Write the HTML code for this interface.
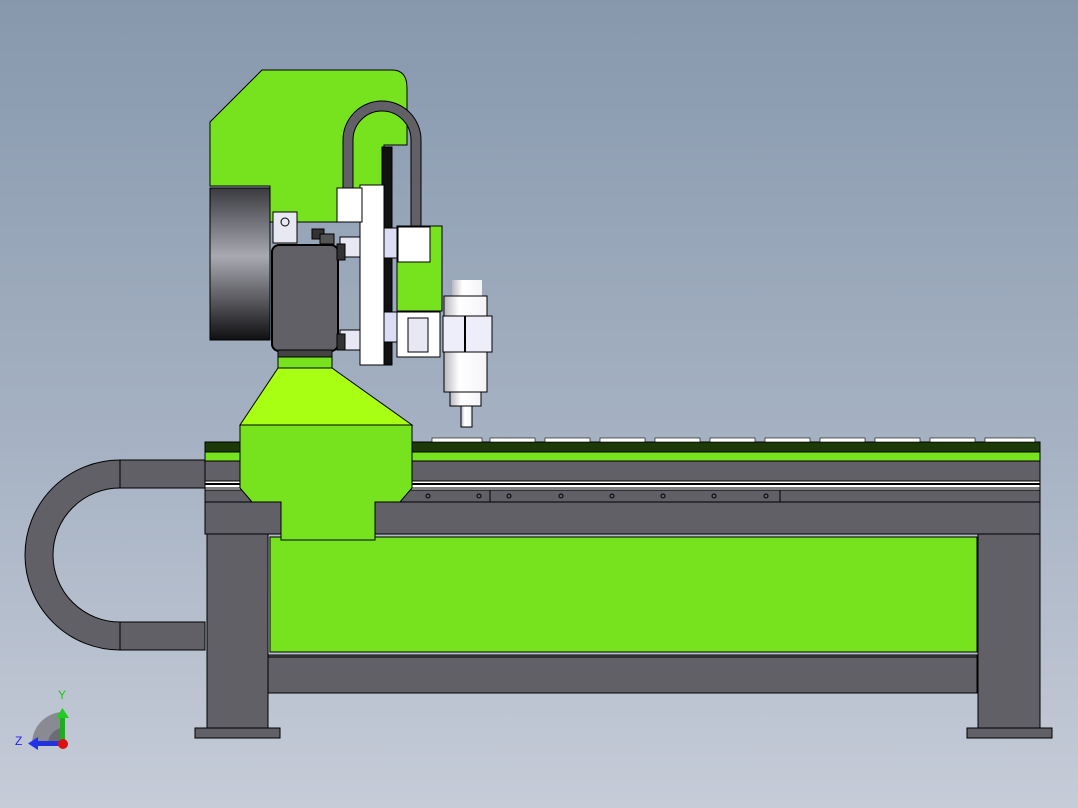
<!DOCTYPE html>
<html><head><style>
html,body{margin:0;padding:0;width:1078px;height:808px;overflow:hidden}
body{background:linear-gradient(#8798ad,#a6b2c3 55%,#c6ccd8)}
svg{display:block}
</style></head><body>
<svg width="1078" height="808" viewBox="0 0 1078 808" xmlns="http://www.w3.org/2000/svg">
<defs>
<linearGradient id="drum" x1="0" y1="0" x2="0" y2="1">
<stop offset="0" stop-color="#3a3a40"/><stop offset="0.45" stop-color="#a9a9b2"/><stop offset="1" stop-color="#101012"/></linearGradient>
<linearGradient id="sp" x1="0" y1="0" x2="1" y2="0">
<stop offset="0" stop-color="#b8b8c0"/><stop offset="0.35" stop-color="#ffffff"/><stop offset="1" stop-color="#f4f4f8"/></linearGradient>
</defs>
<g stroke="#000" stroke-width="1">
<!-- cable chain -->
<path d="M205 460 H120 A95 95 0 0 0 120 650 H205 V622 H120 A67 67 0 0 1 120 488 H205 Z" fill="#616066"/>
<line x1="120" y1="460" x2="120" y2="488"/><line x1="120" y1="622" x2="120" y2="650"/>
<!-- legs -->
<rect x="207" y="533" width="61" height="195" fill="#616066"/>
<rect x="195" y="728" width="85" height="10" fill="#616066"/>
<rect x="978" y="533" width="62" height="195" fill="#616066"/>
<rect x="967" y="728" width="85" height="10" fill="#616066"/>
<!-- panel -->
<rect x="270" y="537" width="707" height="115" fill="#76e31e"/>
<rect x="268" y="655" width="709" height="38" fill="#616066"/>
<line x1="268" y1="657" x2="977" y2="657"/>
<!-- beam -->
<rect x="205" y="502" width="835" height="32" fill="#616066"/>
<rect x="205" y="490" width="835" height="12" fill="#616066"/>
<rect x="205" y="461" width="835" height="20" fill="#616066"/>
<rect x="205" y="452" width="835" height="9" fill="#76e31e"/>
<rect x="205" y="442" width="835" height="10" fill="#1c3a06"/>
<rect x="205" y="481" width="835" height="9" fill="#fff"/>
<line x1="205" y1="484" x2="1040" y2="484" stroke-width="2"/>
<line x1="205" y1="488" x2="1040" y2="488"/>
<line x1="490" y1="490" x2="490" y2="502"/><line x1="780" y1="490" x2="780" y2="502"/>
<!-- gantry -->
<path d="M278 368 H332 L412 425 H240 Z" fill="#a8ff14"/>
<rect x="278" y="356" width="54" height="12" fill="#76e31e"/>
<path d="M240 425 H412 V488 L400 502 H375 V540 H281 V502 H252 L240 488 Z" fill="#76e31e"/>
<!-- upper body -->
<path d="M210 122 L262 70 H392 Q407 70 407 88 V145 H384 V188 H337 V222 H270 V186 H210 Z" fill="#76e31e"/>
<rect x="210" y="188" width="60" height="152" fill="url(#drum)"/>
<rect x="272" y="245" width="66" height="106" rx="7" fill="#616066" stroke-width="2"/>
<rect x="278" y="350" width="54" height="7" fill="#444"/>
<rect x="273" y="212" width="24" height="31" fill="#e8e8f2"/>
<circle cx="285" cy="222" r="4" fill="none"/>
<rect x="312" y="229" width="12" height="10" fill="#333"/>
<rect x="320" y="234" width="14" height="10" fill="#555"/>
<!-- cable loop -->
<path d="M343 190 V140 A38 38 0 0 1 421 140 V228 H411 V140 A28 28 0 0 0 353 140 V190 Z" fill="#616066"/>
<!-- plate -->
<rect x="382" y="147" width="10" height="218" fill="#111"/>
<rect x="360" y="185" width="24" height="180" fill="#fff"/>
<rect x="337" y="188" width="25" height="34" fill="#fff"/>
<rect x="340" y="237" width="20" height="20" fill="#e8e8f4"/>
<rect x="340" y="330" width="20" height="20" fill="#e8e8f4"/>
<rect x="337" y="244" width="8" height="16" fill="#333"/>
<rect x="337" y="334" width="8" height="16" fill="#333"/>
<rect x="384" y="228" width="14" height="30" fill="#dcdcf4"/>
<rect x="384" y="312" width="14" height="30" fill="#dcdcf4"/>
<rect x="397" y="226" width="45" height="85" fill="#76e31e"/>
<rect x="398" y="227" width="32" height="35" fill="#fff"/>
<rect x="397" y="312" width="43" height="45" fill="#fff"/>
<rect x="408" y="318" width="20" height="34" fill="#e8e8f4"/>
<!-- spindle -->
<rect x="452" y="280" width="30" height="16" fill="url(#sp)" stroke="none"/>
<rect x="444" y="296" width="43" height="96" fill="url(#sp)"/>
<rect x="443" y="316" width="49" height="36" fill="#eeeefa"/>
<line x1="465" y1="316" x2="465" y2="352" stroke-width="2"/>
<rect x="450" y="392" width="31" height="14" fill="url(#sp)"/>
<rect x="461" y="406" width="11" height="21" fill="url(#sp)"/>
</g>
<!-- rail ticks -->
<g fill="#fff" stroke="#000" stroke-width="0.6">
<rect x="432" y="438" width="50" height="4"/><rect x="490" y="438" width="45" height="4"/><rect x="545" y="438" width="45" height="4"/><rect x="600" y="438" width="45" height="4"/><rect x="655" y="438" width="45" height="4"/><rect x="710" y="438" width="45" height="4"/><rect x="765" y="438" width="45" height="4"/><rect x="820" y="438" width="45" height="4"/><rect x="875" y="438" width="45" height="4"/><rect x="930" y="438" width="45" height="4"/><rect x="985" y="438" width="50" height="4"/>
</g>
<g fill="none" stroke="#000">
<circle cx="428" cy="496" r="2"/><circle cx="479" cy="496" r="2"/><circle cx="509" cy="496" r="2"/><circle cx="561" cy="496" r="2"/><circle cx="612" cy="496" r="2"/><circle cx="663" cy="496" r="2"/><circle cx="714" cy="496" r="2"/><circle cx="766" cy="496" r="2"/>
</g>
<!-- triad -->
<path d="M32 744 A32 32 0 0 1 62 712 V744 Z" fill="#8a8a92"/>
<path d="M48 744 A16 16 0 0 1 62 728 V744 Z" fill="#6c6c74"/>
<rect x="60" y="716" width="5" height="28" fill="#22aa22"/><path d="M56 718 L62.5 708 L69 718 Z" fill="#22cc22"/>
<rect x="36" y="741" width="26" height="5" fill="#2233dd"/><path d="M38 737 L28 743.5 L38 750 Z" fill="#2233ee"/>
<circle cx="63" cy="744" r="5" fill="#dd1111"/>
<text x="58" y="699" font-family="Liberation Sans,sans-serif" font-size="12" fill="#1c1">Y</text>
<text x="15" y="745" font-family="Liberation Sans,sans-serif" font-size="12" fill="#22e">Z</text>
</svg>
</body></html>
